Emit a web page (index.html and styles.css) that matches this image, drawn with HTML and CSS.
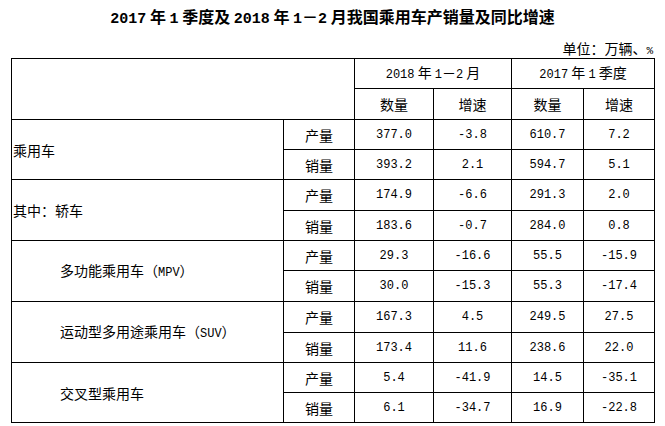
FILE: index.html
```html
<!DOCTYPE html>
<html lang="zh-CN">
<head>
<meta charset="utf-8">
<link rel="stylesheet" href="styles.css">
</head>
<body>
<div class="page">
  <h1 class="title"><span class="num">2017</span> 年 <span class="num">1</span> 季度及 <span class="num">2018</span> 年 <span class="num">1</span>－<span class="num">2</span> 月我国乘用车产销量及同比增速</h1>
  <div class="unit">单位：万辆、<span class="num">%</span></div>
  <table class="data">
    <colgroup>
      <col class="c-label"><col class="c-kind"><col class="c-a"><col class="c-b"><col class="c-c"><col class="c-d">
    </colgroup>
    <tr class="r30">
      <td rowspan="2" colspan="2"></td>
      <td colspan="2" class="ctr"><span class="num">2018</span> 年 <span class="num">1</span>－<span class="num">2</span> 月</td>
      <td colspan="2" class="ctr"><span class="num">2017</span> 年 <span class="num">1</span> 季度</td>
    </tr>
    <tr class="r31">
      <td class="ctr">数量</td><td class="ctr">增速</td><td class="ctr">数量</td><td class="ctr">增速</td>
    </tr>

    <tr class="r30">
      <td rowspan="2" class="label">乘用车</td>
      <td class="ctr">产量</td><td class="num ctr">377.0</td><td class="num ctr">-3.8</td><td class="num ctr">610.7</td><td class="num ctr">7.2</td>
    </tr>
    <tr class="r30">
      <td class="ctr">销量</td><td class="num ctr">393.2</td><td class="num ctr">2.1</td><td class="num ctr">594.7</td><td class="num ctr">5.1</td>
    </tr>

    <tr class="r31">
      <td rowspan="2" class="label">其中：轿车</td>
      <td class="ctr">产量</td><td class="num ctr">174.9</td><td class="num ctr">-6.6</td><td class="num ctr">291.3</td><td class="num ctr">2.0</td>
    </tr>
    <tr class="r30">
      <td class="ctr">销量</td><td class="num ctr">183.6</td><td class="num ctr">-0.7</td><td class="num ctr">284.0</td><td class="num ctr">0.8</td>
    </tr>

    <tr class="r30">
      <td rowspan="2" class="label sub">多功能乘用车（<span class="num">MPV</span>）</td>
      <td class="ctr">产量</td><td class="num ctr">29.3</td><td class="num ctr">-16.6</td><td class="num ctr">55.5</td><td class="num ctr">-15.9</td>
    </tr>
    <tr class="r31">
      <td class="ctr">销量</td><td class="num ctr">30.0</td><td class="num ctr">-15.3</td><td class="num ctr">55.3</td><td class="num ctr">-17.4</td>
    </tr>

    <tr class="r31">
      <td rowspan="2" class="label sub">运动型多用途乘用车（<span class="num">SUV</span>）</td>
      <td class="ctr">产量</td><td class="num ctr">167.3</td><td class="num ctr">4.5</td><td class="num ctr">249.5</td><td class="num ctr">27.5</td>
    </tr>
    <tr class="r30">
      <td class="ctr">销量</td><td class="num ctr">173.4</td><td class="num ctr">11.6</td><td class="num ctr">238.6</td><td class="num ctr">22.0</td>
    </tr>

    <tr class="r30">
      <td rowspan="2" class="label sub">交叉型乘用车</td>
      <td class="ctr">产量</td><td class="num ctr">5.4</td><td class="num ctr">-41.9</td><td class="num ctr">14.5</td><td class="num ctr">-35.1</td>
    </tr>
    <tr class="r30">
      <td class="ctr">销量</td><td class="num ctr">6.1</td><td class="num ctr">-34.7</td><td class="num ctr">16.9</td><td class="num ctr">-22.8</td>
    </tr>
  </table>
</div>
</body>
</html>
```
FILE: styles.css
```css
html, body {
  margin: 0;
  padding: 0;
  background: #ffffff;
}
body {
  font-family: "Noto Sans CJK SC", "Noto Sans", sans-serif;
  color: #000000;
  font-size: 14px;
}
.page {
  width: 665px;
  height: 426px;
  overflow: hidden;
  padding-top: 5px;
  box-sizing: border-box;
}
.title {
  margin: 0;
  font-size: 16px;
  font-weight: 700;
  line-height: 22px;
  height: 22px;
  text-align: center;
}
.title .num {
  font-family: "Liberation Mono", "DejaVu Sans Mono", monospace;
  font-size: 15px;
  font-weight: 700;
}
.unit {
  margin-top: 11px;
  height: 20px;
  line-height: 20px;
  text-align: right;
  padding-right: 12px;
}
.unit .num {
  font-family: "Liberation Mono", monospace;
  font-size: 11px;
}
.data {
  margin-left: 11px;
  border-collapse: collapse;
  table-layout: fixed;
  width: 644px;
}
.data td {
  border: 1px solid #000000;
  padding: 0;
  line-height: 18px;
  vertical-align: middle;
  white-space: nowrap;
}
.c-label { width: 272px; }
.c-kind { width: 71px; }
.c-a { width: 79px; }
.c-b { width: 78px; }
.c-c { width: 72px; }
.c-d { width: 71px; }
.r30 { height: 30px; }
.r31 { height: 31px; }
.ctr { text-align: center; }
.label {
  text-align: left;
  padding-left: 1px !important;
}
.label.sub {
  padding-left: 48px !important;
}
.num {
  font-family: "Liberation Mono", "DejaVu Sans Mono", monospace;
  font-size: 12px;
}
```
